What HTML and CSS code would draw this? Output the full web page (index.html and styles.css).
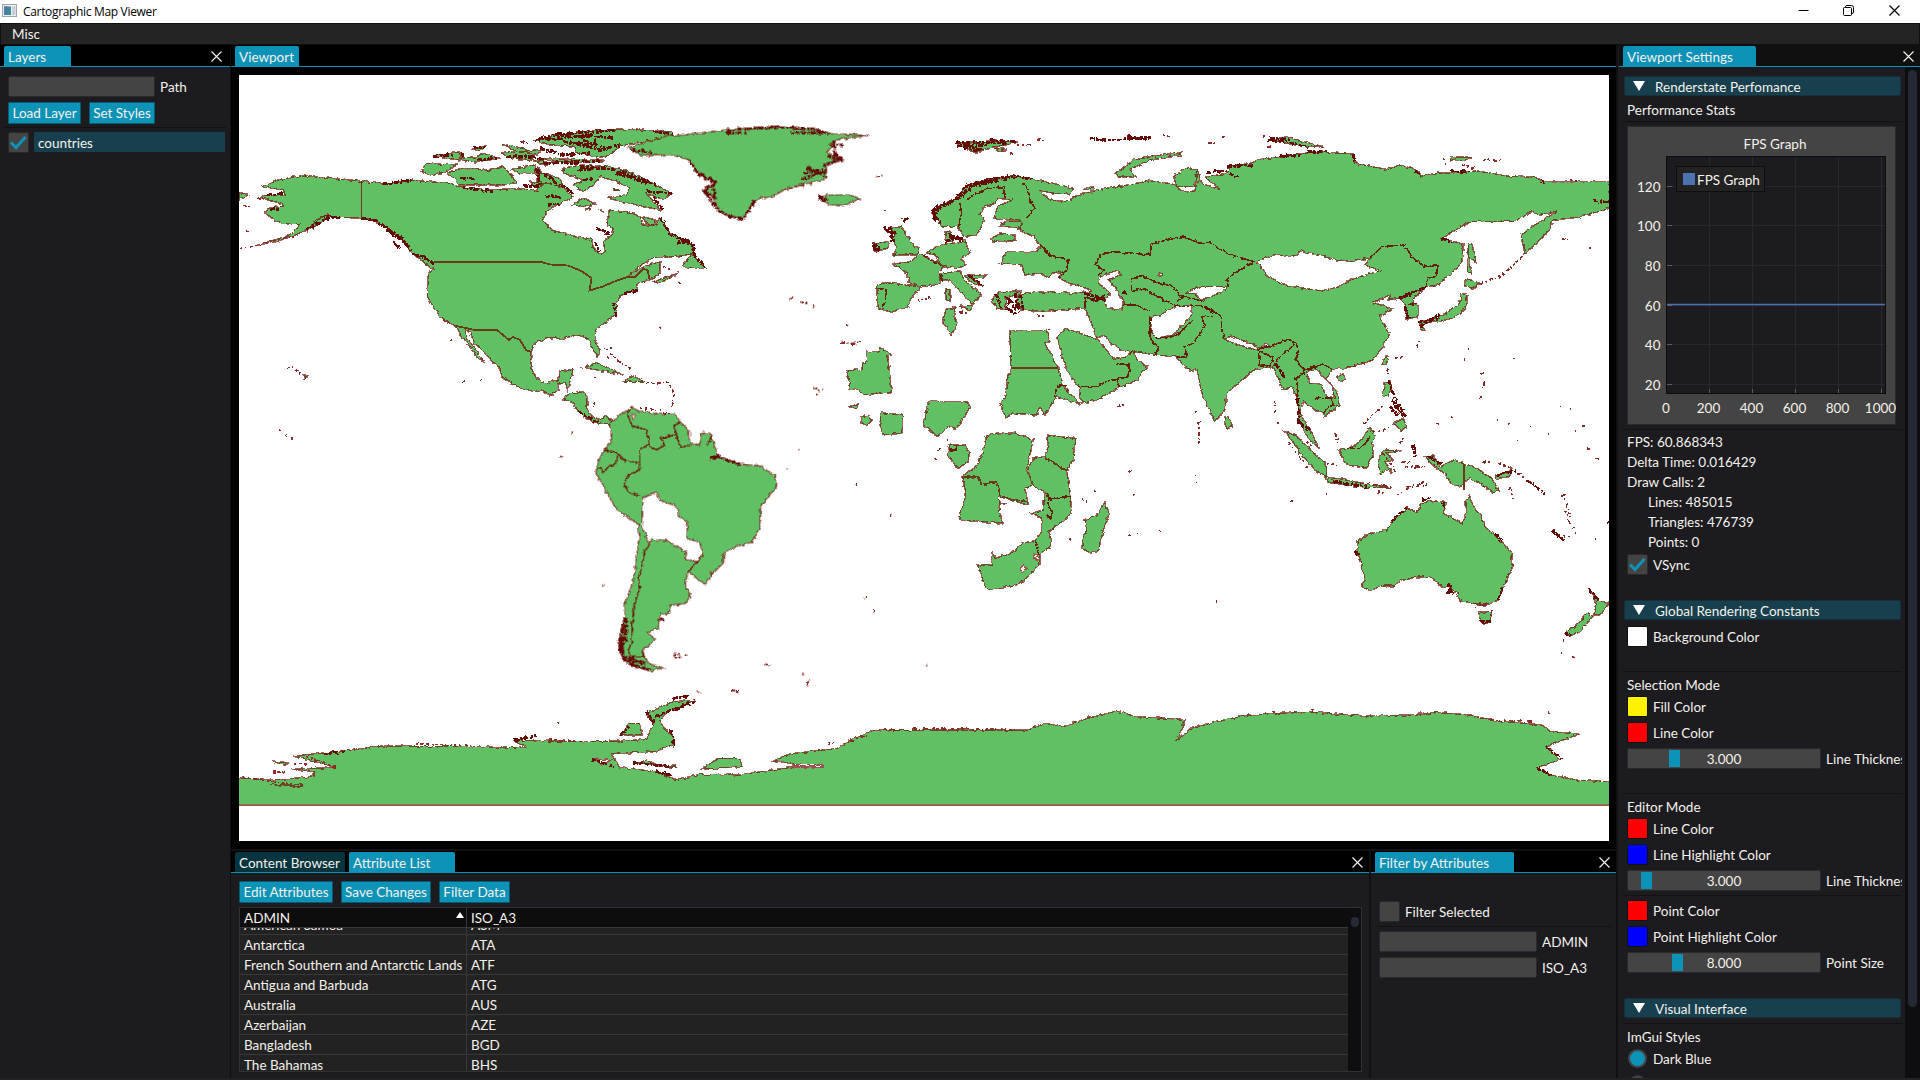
FILE: index.html
```html
<!DOCTYPE html>
<html lang="en">
<head>
<meta charset="utf-8">
<title>Cartographic Map Viewer</title>
<link rel="stylesheet" href="styles.css">
</head>
<body>
<svg class="defs" width="0" height="0">
  <symbol id="x" viewBox="0 0 11 11"><path d="M.5.5l10 10M10.5.5l-10 10" fill="none" stroke="currentColor" stroke-width="1.2"/></symbol>
  <symbol id="check" viewBox="0 0 20 20"><path d="M3 10.5l5 5L17.5 5" fill="none" stroke="#0e93b8" stroke-width="3"/></symbol>
  <symbol id="down" viewBox="0 0 12 10"><path d="M0 0h12L6 10z" fill="#fff"/></symbol>
</svg>
<div class="app">
  <header class="titlebar">
    <svg class="appicon" width="15" height="13" viewBox="0 0 15 13"><rect x=".5" y=".5" width="14" height="12" fill="#e9eef0" stroke="#9aa5ac"/><rect x="2" y="2.500" width="7" height="8.500" fill="#3d8c93"/><rect x="2" y="2.500" width="3.500" height="8.500" fill="#4b79a8"/><rect x="10" y="2.500" width="3.500" height="8.500" fill="#c7d0d4"/></svg>
    <span class="title">Cartographic Map Viewer</span>
    <div class="winctl">
      <svg width="11" height="11" viewBox="0 0 11 11"><path d="M.5 5.500h10" stroke="#000"/></svg>
      <svg class="restore" width="11" height="11" viewBox="0 0 11 11"><path d="M2.500 2.500V2Q2.500.5 4 .5h4.500Q10.500.5 10.500 2.500V7Q10.500 8.500 9 8.500" fill="none" stroke="#000"/><rect x=".5" y="2.500" width="8" height="8" rx="1" fill="none" stroke="#000"/></svg>
      <svg width="11" height="11"><use href="#x"/></svg>
    </div>
  </header>
  <nav class="menubar">Misc</nav>
  <main class="dock">
    <section class="panel layers">
      <div class="tabs"><span class="tab w67">Layers</span><svg class="close" width="11" height="11"><use href="#x"/></svg></div>
      <div class="body">
        <div class="row"><span class="input w147"></span><span>Path</span></div>
        <div class="row buttons"><span class="btn w73">Load Layer</span><span class="btn w66">Set Styles</span></div>
        <hr>
        <div class="row layer"><span class="box"><svg width="20" height="20"><use href="#check"/></svg></span><span class="selectable">countries</span></div>
      </div>
    </section>
    <div class="center">
      <section class="panel viewport">
        <div class="tabs"><span class="tab w64">Viewport</span></div>
        <div class="canvas">
<svg class="map" viewBox="239 75 1370 766">
<defs><filter id="rough" x="230" y="60" width="1390" height="790" filterUnits="userSpaceOnUse" color-interpolation-filters="sRGB"><feTurbulence type="fractalNoise" baseFrequency=".22" numOctaves="2" seed="4"/><feDisplacementMap in="SourceGraphic" scale="4.2" xChannelSelector="R" yChannelSelector="G"/></filter></defs>
<g filter="url(#rough)">
 <!-- North America -->
 <g transform="translate(230 110) scale(.33333)">
  <path class="land" d="M95 230L150 208 215 197 300 205 395 213 460 222 545 210 600 215 660 220 700 232 780 240 840 236 905 238 925 245 920 200 925 170 950 215 1000 235 1030 262 1000 275 975 290 950 305 938 330 965 360 1030 378 1085 388 1090 415 1110 432 1125 425 1120 395 1150 370 1145 350 1130 345 1138 300 1190 305 1230 318 1240 345 1275 345 1290 322 1320 370 1350 385 1390 405 1395 430 1340 440 1270 443 1235 465 1190 500 1240 470 1290 455 1290 490 1260 510 1225 520 1220 540 1180 552 1160 575 1160 610 1130 635 1097 660 1095 690 1110 720 1105 740 1085 715 1075 685 1040 675 1000 685 950 683 910 705 903 730 903 775 920 805 945 818 985 810 990 785 1030 778 1025 800 1012 840 1008 820 985 822 985 840 965 858 935 840 910 845 860 828 815 800 810 775 770 735 735 700 720 665 706 660 708 680 765 758 740 740 715 705 690 670 678 648 640 630 615 600 592 560 595 490 610 480 580 455 545 430 520 395 480 360 430 330 395 325 330 322 290 315 255 345 210 370 140 395 75 408 180 375 210 345 150 340 105 310 115 295 160 288 155 280 95 265 100 258 165 255 160 240Z"/>
  <path class="land" d="M27 250L55 256 27 268ZM575 185L590 160 680 165 650 185 600 195ZM650 190L690 175 780 180 820 170 860 215 830 225 690 225 670 205ZM610 140L690 125 690 145 740 140 760 130 810 145 740 157 690 150ZM725 120L765 108 755 122ZM815 102L880 115 910 130 905 150 850 145 810 130 860 125ZM915 92L975 75 1050 65 1170 57 1325 65 1330 78 1240 95 1170 108 1140 135 1110 142 1040 128 1030 108 960 105ZM930 145L1120 150 1105 158 980 155ZM848 178L915 165 915 190 870 190ZM925 185L990 205 1000 230 930 215ZM998 175L1050 165 1140 170 1210 190 1260 215 1325 250 1300 268 1250 252 1292 300 1240 290 1180 275 1130 265 1190 255 1200 235 1150 210 1110 200 1090 225 1060 245 1030 225 1060 210 1000 190ZM1030 285L1060 262 1095 282 1060 290ZM1355 470L1385 432 1430 475 1395 475ZM1270 515L1345 488 1290 520ZM1060 772L1100 758 1180 795 1130 785ZM1178 815L1210 798 1245 815ZM1000 868L1020 848 1060 845 1072 860 1070 895 1085 920 1105 930 1125 918 1145 930 1145 945 1105 942 1070 925 1045 905 1030 880ZM222 795l10 5-6 8z"/>
  <path class="land" d="M250 352L300 318 270 322 230 365ZM1065 296l20-3-4 8zM1108 302l8-3 3 6zM1145 238h22l-6 5zM870 125l70-8-20 16zM905 150l60 8-20 10zM900 215l40 10-20 8zM1235 320l45 10-10 14-20-4z"/>
  <path class="fjord" d="M395 325L440 332 480 362 520 392 548 430 580 440 612 462M455 345L520 385M470 360L530 400M490 395L515 418M915 92L975 75 1060 80 1150 82M950 90L1090 75M1040 100L1110 120 1170 105M1050 170L1150 178 1260 215M1250 245L1325 250M1060 210L1090 205M1290 322L1320 370 1350 385 1390 405 1395 440 1430 475M700 130L690 145M830 140L905 140 940 150M700 233L790 245M880 225L930 230 920 180 1000 230 1030 250M230 360L300 320 330 322M1150 575L1160 620M1180 552L1225 540M460 222L545 210M1270 260L1300 300M1045 905L1105 938M980 72L1060 68 1160 60M1000 95L1080 105 1100 90M930 115L1000 135 1080 130M1060 90l60 20M1045 180l60-5M1160 190l60 20 60 15M690 205l50 2M945 258l50 4M950 282l40 3M1100 355l40 15M1095 395l15 30M555 432l55 25M310 318l20 5M110 255l50-4M120 300l30-4M610 140l60-8M740 150l60-5M730 115l35-4M940 160l170-6M1270 65l60 8M1340 400l40-8"/>
  <path class="dots" d="M75 408L210 372M170 773l20-2M195 780l25 12M40 287l30 3M85 265l15 5M1125 715l20 3M1140 730l35 30 35 20M1130 740l15 10M1250 818l70 2M1320 825l12 25-5 40M1230 895l60 5M1095 875l-5 15M1300 908l30 5M50 360l12 8M30 415l40-6M148 962h4M166 976h4M181 985h4M698 815l8 3M748 810l4 4M1288 652l5 2M1345 515l5 4M660 690h5M1090 803l6 3M870 95h25M640 632l30 10M1115 360l12 15M1300 470l20 10"/>
 </g>
 <!-- Greenland, Iceland, South America -->
 <g transform="translate(560 110) scale(.33333 .38265)">
  <path class="land" d="M205 98L330 65 345 68 500 52 640 43 760 48 815 62 925 66 830 78 800 110 850 130 800 145 800 180 680 205 640 225 585 235 550 285 510 278 480 265 455 225 430 210 465 190 440 180 410 160 385 130 350 120 240 118ZM775 230L800 222 870 222 900 232 850 250 810 248Z"/>
  <path class="land" fill-rule="evenodd" d="M215 775L205 785 180 795 170 805 150 815 155 860 135 888 115 915 108 950 125 975 150 1015 170 1045 235 1083 238 1110 230 1170 220 1230 195 1290 195 1325 175 1390 185 1430 220 1455 270 1466 310 1458 265 1445 245 1415 285 1385 265 1365 295 1355 300 1318 330 1315 330 1295 375 1290 392 1272 375 1240 385 1205 435 1240 460 1210 490 1185 490 1160 530 1140 575 1130 600 1090 602 1035 650 985 645 955 600 930 540 925 475 905 450 845 425 842 420 875 390 872 388 840 360 815 345 795 300 795 230 785ZM250 1012L290 1000 300 1020 350 1035 355 1060 383 1080 380 1120 420 1130 428 1165 410 1178 375 1175 380 1155 320 1125 275 1123 268 1135 245 1085Z"/>
  <path class="border" d="M215 775L203 795 215 825 262 838 268 875 240 885 240 940 205 955 193 975 205 998 240 1010M130 888L170 895 190 915 235 922M175 900L165 925 145 932 130 945 115 935M268 880L290 888 312 878 305 858 350 848 342 825 360 815M350 848L360 880 390 878M445 875L455 848M428 1165L385 1205M268 1135L255 1150 245 1200 235 1220 238 1250 225 1290 218 1330 215 1390 205 1410 210 1430 250 1430V1415"/>
  <path class="gap" d="M216 795l8 0 0 8-6 3z"/>
  <path class="fjord" d="M195 1325L180 1380 178 1410 190 1432 215 1450 270 1463M185 1385L190 1425 225 1445M200 1330L195 1380M180 1400L195 1440 240 1458M190 1375L185 1420M190 1350l10 40M205 1430l50 20M220 1440L255 1445M300 1330l10 2M385 130L410 160 440 178 465 190 435 205 450 235 480 265 510 278 550 284 585 238M435 215L455 240M460 190l5 35M430 210L470 230M415 170l45 15M500 52L640 45 760 50 810 65M820 80L830 130 790 145M810 95l40-5M800 120l50 10M725 180L800 160M730 165l70-10M740 150l60 25M690 60h100M500 60h60M775 232l30 2M775 226l20 12M455 905l30 5M450 912l30-10M540 925L475 908M215 105l60 5"/>
  <path class="dots" d="M640 225L680 205 760 192M340 1423l42 2M342 1430l30 2M612 1448l28 6M690 493h6M722 503l22 3M758 512l8 8M845 605l35 6 20-8M857 560l10 3M950 173l16-2M760 725l20 10 12-5M765 742l12 3M725 1472l12 3M745 1490l-4 15M408 1520l16 4M518 1517l18 2M130 1242h4M0 905l12 5M35 842h5M300 567h3M355 447h4M714 888h3M679 938h3M889 977h3M990 1060h3M913 1275h3M940 1310h4M1099 1452h3M452 1212l12-4"/>
 </g>
 <!-- Europe, Africa, Asia -->
 <g transform="translate(840 120) scale(.33333)">
  <path class="land" fill-rule="evenodd" d="M275 280L290 262 350 235 380 195 440 180 520 168 580 178 640 190 700 205 690 222 640 220 600 212 630 240 690 245 700 230 740 220 780 208 860 195 930 182 1000 192 1030 218 1065 212 1072 185 1060 180 1072 148 1085 190 1140 208 1095 172 1160 160 1170 140 1230 130 1260 118 1330 108 1430 95 1540 102 1545 130 1640 148 1680 135 1730 150 1745 168 1780 160 1860 158 1910 152 2000 168 2090 172 2110 185 2310 185 2310 265 2215 292 2140 300 2125 335 2080 380 2055 402 2042 345 2080 318 2150 275 2100 285 2070 275 2025 305 1890 305 1805 355 1870 372 1865 430 1795 495 1760 500 1715 540 1735 560 1735 590 1700 598 1695 550 1680 535 1645 540 1650 525 1600 548 1655 565 1620 590 1650 640 1620 695 1600 720 1520 745 1475 745 1460 775 1490 815 1498 855 1450 895 1455 880 1425 870 1390 845 1380 880 1410 930 1438 985 1405 955 1375 900 1370 830 1355 800 1330 812 1315 775 1295 740 1240 750 1160 820 1155 870 1125 905 1085 820 1070 745 1050 755 1005 710 945 705 880 695 850 695 815 670 790 645 770 655 750 600 735 565 610 575 540 570 530 540 550 520 620 515 700 520 760 512 690 490 655 475 665 455 635 460 625 475 600 460 555 465 545 435 480 430 500 395 590 395 600 375 580 350 545 335 545 320 480 312 545 300 465 297 470 262 515 240 475 235 465 250 430 262 420 285 435 300 410 345 370 350 355 320 305 320ZM1250 425L1300 405 1365 410 1380 392 1510 425 1590 415 1575 435 1620 452 1530 480 1500 500 1445 512 1345 498 1285 470ZM775 470L835 450 840 465 805 480 830 510 850 540 845 570 800 565 795 540 810 520 775 490ZM930 590L960 585 1000 562 1055 555 1055 585 1000 645 945 655 935 630ZM1035 520L1080 500 1160 500 1150 515 1085 540 1065 520ZM1155 655L1175 648 1255 680 1250 690 1165 665ZM1262 682L1280 670 1300 680ZM1400 755L1430 745 1450 770 1480 800 1483 835 1460 828 1445 792 1410 790ZM955 460l10-3 3 8-10 3Z"/>
  <path class="land" d="M1000 168L1045 142 1070 150 1065 200 1010 200ZM825 160L880 120 960 105 1025 98 1020 106 930 120 870 148 890 172 835 170ZM345 68L430 65 460 60 535 66 500 75 440 85 410 100 380 85ZM460 82l40 8-20 4z"/>
  <path class="land" d="M112 495L135 488 205 495 245 503 215 530 205 560 155 577 115 565 110 530ZM160 432L210 425 240 403 300 430 310 440 298 455 300 490 265 500 210 492 200 460ZM258 400L290 378 375 362 390 400 365 415 378 435 360 443 305 440 285 405ZM315 335L335 332 335 365 318 362ZM160 405L170 385 160 360 165 340 150 325 185 320 200 345 225 380 240 385 232 405ZM100 395L100 368 145 365 145 385ZM300 480L300 462 360 452 370 475 395 500 425 520 405 545 400 555 390 545 350 500 330 480ZM360 558l38-3-8 15zM375 465L440 465 430 475 400 475 430 500 390 485ZM318 508l12 0 0 35-12-2zM455 540L480 515 545 512 540 525 495 530 500 570 470 565ZM450 355L480 342 525 345 525 362 465 365ZM480 318L500 302 545 305 545 325ZM730 205l30-5 0 12z"/>
  <path class="land" d="M318 568L345 563 342 590 352 615 335 645 308 605ZM80 695H118V682L158 706 143 708 155 815 75 825 55 808 25 808 30 785 20 752 65 748 68 730 80 725ZM265 845L380 845 390 862 350 925 325 920 290 950 268 925 250 920 258 880ZM122 878L188 885 186 940 130 945 120 915ZM65 890L85 885 97 900 80 917 65 908ZM25 860L55 852 50 865ZM328 975H375L388 1000 385 1025 355 1045 325 1010ZM510 632H620L630 665 615 670 655 745 665 792 720 852 650 830 615 885 600 860 590 885 520 880 498 895 480 850 500 820 502 765 512 765ZM650 650L680 625 775 660 800 690 820 718 860 710 880 692 885 710 920 740 890 780 835 805 765 842 725 850 718 805 680 750ZM440 945L520 938 580 960 560 1050 580 1095 555 1105 565 1155 475 1130 478 1150H500L478 1155 480 1190 490 1210 358 1200 365 1165 380 1130 365 1070 385 1055 410 1040 430 995ZM620 945L705 955 700 1020 680 1050 690 1110 695 1180 665 1205 625 1235 635 1260 630 1285 600 1300 600 1330 560 1375 530 1395 450 1408 435 1400 415 1335 455 1335 455 1292 465 1315 515 1300 545 1270 585 1262 605 1235 605 1195 575 1180 610 1170 615 1115 580 1100 562 1050 578 1015 615 1010 625 980ZM795 1145L808 1180 790 1230 775 1295 750 1300 728 1285 730 1250 740 1230 735 1200 775 1180Z"/>
  <path class="gap" d="M538 1345l12-8 12 8-14 14zM580 1305l12-2 4 12-10 4z"/>
  <path class="land" d="M1155 890L1165 890 1178 918 1160 928ZM1490 770l20-8 5 15-15 8zM1625 735l12-28 8 0-5 25zM1635 790L1650 782 1655 800 1645 830 1630 825ZM1660 910L1690 895 1700 920 1685 932ZM1335 935L1365 945 1460 1035 1460 1070 1430 1055 1390 1010ZM1458 1072L1490 1075 1545 1085 1600 1095 1655 1103 1580 1103 1520 1095 1465 1088ZM1495 990L1530 985 1565 960 1590 922 1605 945 1597 975 1600 1005 1580 1045 1520 1035ZM1620 1065L1615 1020 1630 990 1685 992 1640 1000 1660 1020 1635 1025 1660 1060 1640 1050ZM1755 1010l25-2 15 20 5 12 40-20 60 20 50 30 30 45-20 0-70-40-30 25-25-8-20-30-40-30zM1965 1065l40-5 10-20-5 30-40 5zM1885 370L1895 370 1910 430 1890 415 1895 460 1882 455ZM1880 475L1920 490 1900 505 1875 498ZM1862 520L1880 518 1882 550 1860 585 1820 600 1745 612 1755 630 1740 630 1740 605 1800 590 1860 550ZM1830 110L1900 112 1870 122 1835 120ZM1290 60L1340 50 1450 80 1400 82 1350 72Z"/>
  <path class="border" d="M545 185L565 210 570 240 585 265 560 295M380 240L400 225 440 205 490 200 495 235M360 250L365 280 355 320M600 375L630 405 685 420 680 450 655 475M765 435L780 405 820 395 930 405 935 370 1030 350 1080 370 1110 365 1160 400 1240 425 1200 450 1160 475 1165 500M765 435L790 450 770 470M875 515L875 475 905 468 960 490 1000 500 1030 535M875 515L910 505 960 535 1015 560M850 555L890 555 930 575M930 590L930 655 955 685 945 705M735 530L735 565M740 530L765 545 795 525M1010 545L1030 530 1095 545M1015 560L1090 560M1090 555L1145 590 1145 630 1155 655M1005 710L1040 712 1035 680 1060 670 1095 620 1085 590 1120 590M1250 690L1300 675 1345 658 1370 668 1375 700 1365 720 1395 750 1450 732 1475 750M1255 690L1260 735 1290 735 1300 710 1255 695M1300 740L1310 720 1350 685 1365 672M1395 755L1368 775 1375 810 1370 830M1425 840L1440 832 1475 835 1480 855 1450 875M1590 415L1625 380 1690 375 1720 415 1755 440 1795 437 1785 470 1760 475 1760 500 1680 535M1700 555L1730 550M945 655L1005 650 1060 600M115 505L140 510 130 565M245 403L305 440M718 800L770 800 800 785 865 770 868 735 830 730M830 780L838 803M645 830L650 800 680 795M328 990H350V975M625 1138L692 1128M585 1265L597 1305M1520 985L1565 985 1590 950M620 1115L625 1160 638 1175 632 1198 622 1185M300 462L310 485"/>
  <path class="line2" d="M365 1070H412L425 1093 440 1095 450 1085H472L480 1130 560 1145M615 1012L680 1052"/>
  <path class="fjord" d="M275 275L290 262 350 235 380 195 440 180 520 168 578 178M280 300L295 265 360 232 395 200 450 185M280 275L285 305M370 205L420 188 500 178M285 290l20 20M150 320l15 25M135 325l25 20M130 318l30 35M190 305l15-12M100 370l20 16M98 375l20 18M165 360l-20 5M320 340l45 20M330 350l40 8M315 365l50-15M385 465L430 500M465 520l20 45M500 530l35 45M510 540l-10 30 30 10M525 520l10 50M540 525l10 45M100 380l10 16M345 68L460 68 500 70M350 78L440 75M370 80l50 10M400 95l30-10M450 62l80 4M830 58L930 52M860 50l60 8M750 57l75 3M1285 62l60 4 60 16M1290 55l60 4M1400 95l60-2M1160 140l80-5M1170 160l30 15M1100 158l60-6M1540 102l5 25M1725 150l12 15M2105 178l5 15M1320 105l60 2M735 520l30 10 30 15M750 540l45-5M1095 560l25 20M1645 780L1670 850 1690 870M1655 840l35 50M1665 860l35 30M1650 860l25 30M1335 770l-30-40M1372 835l5 70 35 30M1695 560l10 35M1740 620l60-35M1735 605l60-10M1480 1085l100 15M1720 975l5 35M1765 1010l40 22M1970 1065l60-15M2060 1080l55 42M850 515l10 10M1760 500l-80 35M2260 242l50 4M1805 355l30 10M1830 152l60 4"/>
  <path class="dots" d="M130 270l15 4M180 300l28-8M230 545l40-12M360 575l30 6M590 588l30 0M620 625l15 4M5 665l30 10 25-12M15 612l15 4M110 168l15 0M1078 905v75M1065 875h3M1065 1065h3M1068 1087h3M830 857l25-3M865 1055l10-3M725 1135l22 15M760 1110l5 3M865 1247l10 0M890 1240h5M960 1232h4M685 1252l6 10M530 75l45 0M590 60l22 2M1105 68l20 0M1145 52l15 0M510 103h8M990 50l-30-6M320 960h5M300 985l-5 15M285 1018h3M50 1092h3M150 1188h4M880 1123h4M75 1434h3M100 1472h4M1127 1444h3M1280 80h15M1270 48h20M1305 840v45M1315 905v15M1345 965l30 40 25 35M1460 1030l30 5M1920 490l60-20 30-25 40-40M2165 355l20 4M2245 380l8 6M1810 115l8 15M1930 120l50 0M1730 680l10-25M1665 715l25-5M1645 745v20M1670 1125l35-20M1700 1100l60-5M1610 1115l20 5M1730 1095l30-15M1930 1025l20 0M1975 1030l30 15M2010 1105l10 30M2170 1120l10 30 10 45M1790 915l6-5M1680 970l10-20M1925 760v6M1928 785v20M1922 828v5M1885 688h4M1875 718h3M2020 715h4M2160 862h3M2190 870h3M1970 900h3M2005 912h4M2070 918h4M2125 938h4M2205 932h4M2225 917h10M2245 985l5 10M2265 1015l16 4M2030 960v5M1355 1142h3M1835 890h3M1865 135l35 10M2190 180l25 5M1485 940l10 30M1695 1040l60 0M1685 1025l20 5M1570 910l60-55M1600 720l-80 22M1545 1087l110 14M1630 1000l40 60M2035 1060l25 20M1600 940l50-18M1400 965l20 20"/>
 </g>
 <!-- Australia, New Zealand -->
 <g transform="translate(1240 360) scale(.33333)">
  <path class="land" d="M355 540L380 525 440 510 455 485 500 445 535 458 545 430 580 422 620 428 610 460 665 490 677 470 678 425 688 405 705 450 720 460 735 500 785 545 815 580 818 620 800 660 775 720 735 737 700 730 660 722 650 700 625 680 610 688 580 655 540 650 480 662 465 678 425 678 390 692 365 680 375 660 362 600 350 575ZM715 755L755 758 752 785 735 792 722 780ZM1050 690L1075 720 1107 730 1080 765 1060 765 1070 735ZM1040 760L1060 768 1020 815 990 830 972 818 1010 795Z"/>
  <path class="fjord" d="M455 485l45-42M545 420l30-5M610 430l8 15M765 520L785 545M345 575l10 10M625 670l10 30M620 695l20 5M775 720l12-35M1045 685l30 35M972 820l20 8M718 785l35 0M1100 485l6 5M935 512l38 28"/>
  <path class="dots" d="M700 733h40M500 443l35 12M705 745h4M755 748l-2 25M965 405l8 15M970 525l20 8M975 450l15 40M1000 500l6 20M964 877h3M1000 895h3M968 843h3M154 423h3M257 403h4M1065 536h4"/>
 </g>
 <!-- Antarctica -->
 <g transform="translate(230 680) scale(.88648 .33333)">
  <path class="land" d="M-5 290L45 300 95 290 95 275 70 268 118 262 90 240 72 228 130 212 170 198 285 200 335 203 320 180 400 185 440 183 470 178 478 130 470 100 500 65 525 60 490 100 485 130 500 170 500 195 480 215 430 222 440 262 480 275 505 300 530 283 575 285 610 270 635 262 635 250 612 245 630 222 685 205 700 180 725 152 800 150 900 150 920 130 940 140 960 120 1000 93 1022 110 1078 118 1068 180 1085 145 1110 125 1150 105 1215 95 1255 103 1280 108 1330 105 1360 97 1400 105 1420 120 1480 135 1490 155 1522 162 1485 200 1500 240 1475 262 1490 285 1520 300 1570 307 1570 400H-5ZM532 268L550 235H575L578 260ZM440 165L450 130 462 130 465 165ZM48 243L65 248 60 256ZM455 250L470 240 480 252Z"/>
  <path class="gap" d="M636 254H668V261H636ZM408 236L430 240 420 255Z"/>
  <path class="land" d="M46 314H82V320ZM482 258h22v6z"/>
  <path class="fjord" d="M480 110L525 62M500 55l20-8M478 130L470 95M498 150l3 45M440 165l10-25M320 180l25-12M105 222l25-8M408 238l25 22M455 248l40 12M480 275l20 12M1475 262l15 25M1485 200l18 38"/>
  <path class="dots" d="M210 192l70 5M85 228l35 34M360 180l40 5M725 152l30-2M770 148l60 0M830 145l55 5M700 182l18-15M15 293l70 25M1410 115l60 12M48 275h14M72 252h18M565 30l8 4M652 5l-2 14M1486 95l4 10M675 188h6M1178 92v8M1222 88v8M370 125v4"/>
 </g>
</g>
<!-- straight political borders -->
<path class="plain" d="M361.500 181V218.500M434 262H541L550 264.500 568 265.500 581.500 271 591.500 278 589.500 290.500 603 286.500 613 282 626 277.500 635 277 643 269 647.500 270 649.500 279M456 326L475 330H497L509 340 513 337 520 340 526 350 531.500 352M1010.500 368H1057.500M1464 464V490"/>
<path class="below" d="M239 805H1609V841H239Z"/>
<path class="rim" d="M239 804.500H1609"/>
</svg>
        </div>
      </section>
      <div class="bottom">
        <section class="panel attrs">
          <div class="tabs"><span class="tab off w110">Content Browser</span><span class="tab w106">Attribute List</span><svg class="close" width="11" height="11"><use href="#x"/></svg></div>
          <div class="body">
            <div class="row buttons"><span class="btn w94">Edit Attributes</span><span class="btn w90">Save Changes</span><span class="btn w71">Filter Data</span></div>
            <div class="table">
              <div class="cols">
                <div class="tr th"><span>ADMIN<svg width="8" height="6"><path d="M4 0l4 6H0z" fill="#fff"/></svg></span><span>ISO_A3</span></div>
                <div class="scroll">
                  <div class="tr first"><span>American Samoa</span><span>ASM</span></div>
                  <div class="tr"><span>Antarctica</span><span>ATA</span></div>
                  <div class="tr"><span>French Southern and Antarctic Lands</span><span>ATF</span></div>
                  <div class="tr"><span>Antigua and Barbuda</span><span>ATG</span></div>
                  <div class="tr"><span>Australia</span><span>AUS</span></div>
                  <div class="tr"><span>Azerbaijan</span><span>AZE</span></div>
                  <div class="tr"><span>Bangladesh</span><span>BGD</span></div>
                  <div class="tr"><span>The Bahamas</span><span>BHS</span></div>
                </div>
              </div>
              <div class="vbar"><i></i></div>
            </div>
          </div>
        </section>
        <section class="panel filter">
          <div class="tabs"><span class="tab w139">Filter by Attributes</span><svg class="close" width="11" height="11"><use href="#x"/></svg></div>
          <div class="body">
            <div class="row"><span class="box"></span><span>Filter Selected</span></div>
            <hr>
            <div class="row"><span class="input w158"></span><span>ADMIN</span></div>
            <div class="row"><span class="input w158"></span><span>ISO_A3</span></div>
          </div>
        </section>
      </div>
    </div>
    <section class="panel settings">
      <div class="tabs"><span class="tab w133">Viewport Settings</span><svg class="close" width="11" height="11"><use href="#x"/></svg></div>
      <div class="split">
        <div class="body">
          <div class="head"><svg width="12" height="10"><use href="#down"/></svg>Renderstate Perfomance</div>
          <div class="text perf">Performance Stats</div>
          <hr>
          <svg class="plot" width="269" height="299" viewBox="1627 126 269 299">
            <rect x="1627.500" y="126.500" width="268" height="298" fill="#444" stroke="#2a2a2a"/>
            <rect x="1666.500" y="156.500" width="219" height="237" fill="#1c1b20" stroke="#0c0c0c"/>
            <path d="M1709.500 157v236M1752.500 157v236M1795.500 157v236M1838.500 157v236M1881.500 157v236M1667 186.500h218M1667 225.500h218M1667 265.500h218M1667 305.500h218M1667 344.500h218M1667 384.500h218" stroke="#29292d"/>
            <path d="M1709.500 389v4M1752.500 389v4M1795.500 389v4M1838.500 389v4M1881.500 389v4M1667 186.500h5M1667 225.500h5M1667 265.500h5M1667 305.500h5M1667 344.500h5M1667 384.500h5" stroke="#5c5c5e"/>
            <path d="M1667 304.500h218" stroke="#4870b4" stroke-width="1.300"/>
            <rect x="1676.500" y="166.500" width="88" height="25" fill="#222" stroke="#0e0e0e"/>
            <rect x="1683" y="173" width="12" height="12" fill="#4c72b0"/>
            <text x="1697" y="185">FPS Graph</text>
            <g text-anchor="middle"><text x="1775" y="149">FPS Graph</text><text x="1666" y="413">0</text><text x="1708.500" y="413">200</text><text x="1751.500" y="413">400</text><text x="1794.500" y="413">600</text><text x="1837.500" y="413">800</text><text x="1880.500" y="413">1000</text></g>
            <g text-anchor="end"><text x="1660.500" y="192">120</text><text x="1660.500" y="231">100</text><text x="1660.500" y="271">80</text><text x="1660.500" y="311">60</text><text x="1660.500" y="350">40</text><text x="1660.500" y="390">20</text></g>
          </svg>
          <hr>
          <div class="stats"><div>FPS: 60.868343</div><div>Delta Time: 0.016429</div><div>Draw Calls: 2</div><div class="ind">Lines: 485015</div><div class="ind">Triangles: 476739</div><div class="ind">Points: 0</div></div>
          <div class="row"><span class="box"><svg width="20" height="20"><use href="#check"/></svg></span><span>VSync</span></div>
          <div class="head gap25"><svg width="12" height="10"><use href="#down"/></svg>Global Rendering Constants</div>
          <div class="row"><span class="sw white"></span><span>Background Color</span></div>
          <hr class="far">
          <div class="text">Selection Mode</div>
          <div class="row"><span class="sw yellow"></span><span>Fill Color</span></div>
          <div class="row"><span class="sw red"></span><span>Line Color</span></div>
          <div class="row"><span class="slider"><i style="left:41px"></i><b>3.000</b></span><span>Line Thickness</span></div>
          <hr class="far">
          <div class="text">Editor Mode</div>
          <div class="row"><span class="sw red"></span><span>Line Color</span></div>
          <div class="row"><span class="sw blue"></span><span>Line Highlight Color</span></div>
          <div class="row"><span class="slider"><i style="left:13px"></i><b>3.000</b></span><span>Line Thickness</span></div>
          <hr class="near">
          <div class="row"><span class="sw red"></span><span>Point Color</span></div>
          <div class="row"><span class="sw blue"></span><span>Point Highlight Color</span></div>
          <div class="row"><span class="slider"><i style="left:44px"></i><b>8.000</b></span><span>Point Size</span></div>
          <div class="head gap25"><svg width="12" height="10"><use href="#down"/></svg>Visual Interface</div>
          <hr class="near">
          <div class="text">ImGui Styles</div>
          <div class="row"><span class="radio on"></span><span>Dark Blue</span></div>
          <div class="row"><span class="radio"></span></div>
        </div>
        <div class="bar"><i></i></div>
      </div>
    </section>
  </main>
</div>
</body>
</html>
```
FILE: styles.css
```css
* { box-sizing: border-box; }
body { margin: 0; background: #222; overflow: hidden; color: #f4f1ea; font: 13.5px/20px Lato, sans-serif; }
.defs { display: block; height: 0; }
.app { width: 1920px; height: 1080px; display: flex; flex-direction: column; }
.titlebar { height: 23px; flex: none; background: #fff; color: #000; display: flex; align-items: center; padding-left: 2px; gap: 6px; }
.appicon { margin-top: -2px; }
.title { font: 12px/23px "Open Sans", sans-serif; letter-spacing: -.33px; }
.winctl { margin: -3px 20px 0 auto; display: flex; gap: 34.500px; }
.restore { margin: 0 .5px 0 -.5px; }
.menubar { height: 22px; flex: none; background: #242424; border: 1px solid #101010; padding: 0 11px; line-height: 21px; }
.dock { display: flex; height: 1033px; flex: none; }
.panel { background: #1c1b20; overflow: hidden; display: flex; flex-direction: column; }
.layers { width: 230px; }
.center { width: 1388px; border: solid #101012; border-width: 0 2px 0 1px; display: flex; flex-direction: column; }
.settings { width: 302px; padding-left: 1px; }
.tabs { height: 22px; flex: none; background: #000; border-bottom: 1px solid #0e93b8; display: flex; padding: 1px 5px 0 4px; gap: 4px; }
.layers .tabs { padding-right: 7px; }
.tab { height: 20px; background: #0e93b8; border-radius: 2px 2px 0 0; padding-left: 4px; line-height: 22px; white-space: nowrap; }
.tab.off { background: #06343f; }
.close { margin: 5px 1px 0 auto; }
.body { flex: 1; padding: 9px 8px 0; }
.row { display: flex; gap: 5px; height: 20px; margin-bottom: 6px; line-height: 22px; white-space: nowrap; }
.input, .box { background: #444; border: 1px solid #2a2a2a; border-radius: 2px; height: 21px; flex: none; }
.box { width: 21px; line-height: 0; }
.box svg { display: block; margin: -1px; }
.btn { background: #0e93b8; border: 1px solid #0a5a70; border-radius: 1px; height: 22px; line-height: 21px; text-align: center; }
.buttons { gap: 8px; }
hr { border: 0; height: 1px; background: #121215; margin: 0 -4px; }
.selectable { flex: 1; background: #173f4d; padding-left: 4px; line-height: 22px; margin-right: -3px; }
.layers hr { margin-top: -1px; }
.layer { margin-top: 4px; }
.w64 { width: 64px; } .w66 { width: 66px; } .w67 { width: 67px; } .w71 { width: 71px; } .w73 { width: 73px; }
.w90 { width: 90px; } .w94 { width: 94px; } .w106 { width: 106px; } .w110 { width: 110px; }
.w133 { width: 133px; } .w139 { width: 139px; } .w147 { width: 147px; } .w158 { width: 158px; }

/* map */
.viewport { height: 804px; flex: none; background: #000; }
.canvas { padding: 8px; line-height: 0; }
.map { width: 1370px; height: 766px; background: #fff; display: block; shape-rendering: crispEdges; }
.map path { vector-effect: non-scaling-stroke; }
.land { fill: #61c063; stroke: rgba(112, 8, 4, .65); stroke-width: 1.4px; }
.gap { fill: #fff; stroke: #a05050; stroke-width: 1.3px; }
.border { fill: none; stroke: #6b1d0c; stroke-width: 1.5px; }
.line2, .plain { fill: none; stroke: #6b3a1a; stroke-width: 1.8px; }
.below { fill: #fff; }
.rim { fill: none; stroke: #97634a; stroke-width: 2px; }
.fjord { fill: none; stroke: #650c08; stroke-width: 2.800px; stroke-dasharray: 5 1 3 1 6 2 2 1; }
.dots { fill: none; stroke: #8a2a28; stroke-width: 1.7px; stroke-dasharray: 3 2 2 3 4 2 1 2; }

/* bottom panels */
.bottom { display: flex; flex: 1; min-height: 0; border-top: 2px solid #121212; }
.attrs { width: 1138px; }
.filter { flex: 1; border-left: 2px solid #111114; }
.attrs .body { padding: 8px 8px 0; }
.attrs .buttons { height: 22px; margin-bottom: 4px; }
.table { height: 165px; width: 1123px; border: 1px solid #323234; display: flex; background: #222; overflow: hidden; }
.cols { flex: 1; }
.tr { display: grid; grid-template-columns: 226px 1fr; height: 20px; border-bottom: 1px solid #38383a; line-height: 21px; white-space: nowrap; }
.tr span { padding-left: 4px; }
.tr span + span { border-left: 1px solid #38383a; }
.th { background: #0d0d0d; }
.th span:first-child { display: flex; justify-content: space-between; padding-right: 2px; }
.th svg { margin-top: 4px; }
.scroll { height: 143px; overflow: hidden; }
.first { margin-top: -13px; }
.vbar { width: 13px; background: #0e0e10; padding: 9px 2px 0 3px; }
.vbar i { display: block; height: 10px; border-radius: 4px; background: #262936; }
.filter .body { padding: 28px 8px 0; }
.filter hr { margin-bottom: 4px; }
.filter .row:first-child { margin-bottom: 5px; }

/* settings */
.settings .tabs { background: #101010; }
.split { display: flex; height: 1011px; overflow: hidden; }
.settings .body { width: 283px; margin-right: 3px; flex: none; overflow: hidden; padding: 9px 0 0 8px; }
.bar { flex: 1; background: #0e0e10; padding: 3px 3px 0; }
.bar i { display: block; width: 9px; height: 937px; border-radius: 5px; background: #252835; }
.head { height: 20px; background: #173f4d; border: 1px solid #14303a; border-radius: 2px; margin: 0 1px 6px -3px; padding-left: 8px; line-height: 20px; display: flex; }
.head svg { margin: 4px 10px 0 0; }
.gap25 { margin-top: 26px; }
.settings hr { margin: 1px 0 4px -4px; }
.text { height: 20px; line-height: 19px; }
.perf { height: 18px; line-height: 17px; }
.plot { display: block; }
.plot text { fill: #f4f1ea; font: 13.5px Lato, sans-serif; }
.settings .plot + hr { margin-top: 4px; }
.stats { height: 122px; margin-top: -2px; line-height: 20px; }
.ind { padding-left: 21px; }
.settings .stats + .row { margin-bottom: 0; }
.sw { width: 21px; height: 21px; border-radius: 2px; border: 1px solid #101010; flex: none; }
.white { background: #fff; } .yellow { background: #fff200; } .red { background: #f00; } .blue { background: #00f; }
.settings hr.far { margin-top: 25px; margin-bottom: 4px; }
.settings hr.near { margin-top: -1px; margin-bottom: 4px; }
.slider { width: 194px; height: 21px; background: #444; border: 1px solid #2a2a2a; border-radius: 2px; position: relative; flex: none; text-align: center; line-height: 20px; }
.slider i { position: absolute; top: 1px; width: 11px; height: 17px; background: #0e93b8; }
.slider b { font-weight: 400; }
.radio { width: 19px; height: 19px; margin: 1px; border-radius: 50%; background: #444; border: 1px solid #333; flex: none; }
.on { border: 2px solid #444; background: #0e93b8; }
```
